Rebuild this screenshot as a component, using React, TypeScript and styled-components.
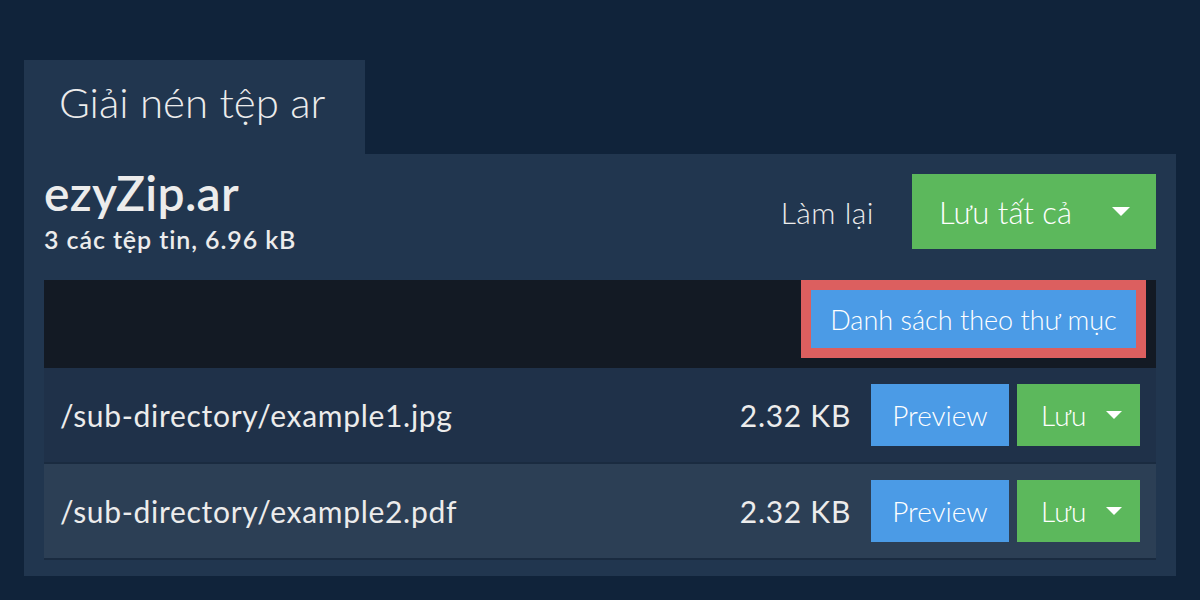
import React from "react";
import styled, { createGlobalStyle } from "styled-components";

const Global = createGlobalStyle`
  html, body { margin: 0; padding: 0; background: #10233a; }
  body { font-family: Lato, "Noto Sans", sans-serif; color: #ececec; }
`;

const Page = styled.div`
  padding: 60px 24px 24px;
  width: 1200px;
  box-sizing: border-box;
`;

const Tab = styled.div`
  display: inline-flex;
  align-items: center;
  width: 341px;
  height: 94px;
  box-sizing: border-box;
  padding: 0 0 10px 35px;
  background: #21364f;
  font-size: 42px;
  font-weight: 300;
  color: #ececec;
`;

const Panel = styled.div`
  background: #21364f;
  padding: 20px 20px 16px;
`;

const Header = styled.div`
  display: flex;
  justify-content: space-between;
  align-items: flex-start;
  height: 106px;
`;

const Titles = styled.div`
  display: flex;
  flex-direction: column;
`;

const Name = styled.div`
  font-size: 48px;
  font-weight: 600;
  line-height: 48px;
  margin-top: -5px;
  letter-spacing: 0.3px;
`;

const Meta = styled.div`
  font-size: 25px;
  font-weight: 600;
  line-height: 28px;
  margin-top: 8px;
  letter-spacing: 0.9px;
`;

const Actions = styled.div`
  display: flex;
  align-items: center;
  gap: 38px;
`;

const TextButton = styled.span`
  font-size: 30px;
  font-weight: 300;
  letter-spacing: 0.5px;
`;

const Caret = styled.span<{ $size: number }>`
  width: 0;
  height: 0;
  border-left: ${(p) => p.$size}px solid transparent;
  border-right: ${(p) => p.$size}px solid transparent;
  border-top: ${(p) => p.$size}px solid #fff;
`;

const Button = styled.div<{ $color: string; $w: number; $h: number; $size: number }>`
  display: flex;
  align-items: center;
  justify-content: center;
  box-sizing: border-box;
  width: ${(p) => p.$w}px;
  height: ${(p) => p.$h}px;
  background: ${(p) => p.$color};
  color: #fff;
  font-size: ${(p) => p.$size}px;
  font-weight: 300;
  white-space: nowrap;
`;

const SplitLabel = styled.span<{ $pad: number }>`
  flex: 1;
  padding-left: ${(p) => p.$pad}px;
`;

const CaretBox = styled.span<{ $w: number }>`
  width: ${(p) => p.$w}px;
  display: flex;
  justify-content: center;
`;

const Toolbar = styled.div`
  display: flex;
  justify-content: flex-end;
  background: #131a24;
  padding: 0 10px 10px 0;
`;

const Outline = styled.div`
  border: 10px solid #dc5f5f;
`;

const Row = styled.div<{ $alt?: boolean }>`
  display: flex;
  align-items: center;
  height: 94px;
  padding: 0 16px;
  background: ${(p) => (p.$alt ? "#2c3f55" : "#1f3149")};
  border-bottom: 2px solid #1a2b40;
  gap: 8px;
`;

const FileName = styled.div`
  flex: 1;
  font-size: 30px;
  font-weight: 400;
  letter-spacing: 0.7px;
`;

const Size = styled.div`
  font-size: 30px;
  font-weight: 400;
  letter-spacing: 0.7px;
  margin-right: 12px;
`;

export default function App() {
  const files = ["/sub-directory/example1.jpg", "/sub-directory/example2.pdf"];
  return (
    <>
      <Global />
      <Page>
        <Tab>Giải nén tệp ar</Tab>
        <Panel>
          <Header>
            <Titles>
              <Name>ezyZip.ar</Name>
              <Meta>3 các tệp tin, 6.96 kB</Meta>
            </Titles>
            <Actions>
              <TextButton>Làm lại</TextButton>
              <Button $color="#5cb85c" $w={244} $h={75} $size={31}>
                <SplitLabel $pad={27}>Lưu tất cả</SplitLabel>
                <CaretBox $w={70}>
                  <Caret $size={9} />
                </CaretBox>
              </Button>
            </Actions>
          </Header>
          <Toolbar>
            <Outline>
              <Button $color="#4b9be6" $w={325} $h={58} $size={27}>
                Danh sách theo thư mục
              </Button>
            </Outline>
          </Toolbar>
          {files.map((f, i) => (
            <Row key={f} $alt={i === 1}>
              <FileName>{f}</FileName>
              <Size>2.32 KB</Size>
              <Button $color="#4b9be6" $w={138} $h={62} $size={28}>
                Preview
              </Button>
              <Button $color="#5cb85c" $w={123} $h={62} $size={28}>
                <SplitLabel $pad={24}>Lưu</SplitLabel>
                <CaretBox $w={52}>
                  <Caret $size={8} />
                </CaretBox>
              </Button>
            </Row>
          ))}
        </Panel>
      </Page>
    </>
  );
}
